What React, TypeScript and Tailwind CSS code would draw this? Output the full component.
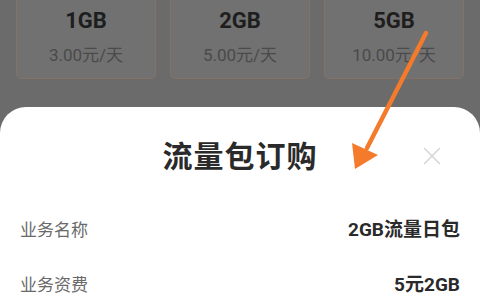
import { X } from "lucide-react";

const plans = [
  { size: "1GB", price: "3.00元/天" },
  { size: "2GB", price: "5.00元/天" },
  { size: "5GB", price: "10.00元/天" },
];

const rows = [
  { label: "业务名称", value: "2GB流量日包" },
  { label: "业务资费", value: "5元2GB" },
];

export default function App() {
  return (
    <div
      className="relative h-[300px] w-[480px] overflow-hidden bg-[#6b6b6b]"
      style={{ fontFamily: 'Roboto, "Noto Sans CJK SC", sans-serif' }}
    >
      <div className="flex gap-[14px] px-4">
        {plans.map((p) => (
          <div
            key={p.size}
            className="-mt-3 flex h-[91px] flex-1 flex-col items-center justify-end rounded-[5px] border border-[#857166] bg-[#717171] pb-[14px]"
          >
            <div className="text-[22px] font-bold leading-none text-[#1e1e1e]">{p.size}</div>
            <div className="mt-[15px] text-[17px] leading-none text-[#4a4a4a]">{p.price}</div>
          </div>
        ))}
      </div>

      <div className="mt-[28px] h-[200px] rounded-t-[26px] bg-white">
        <div className="relative flex h-[96px] items-center justify-center pt-[4px]">
          <div className="text-[30px] font-bold leading-none tracking-[1px] text-[#2a2a2a]">流量包订购</div>
          <X className="absolute right-[33px] top-[34px] h-[30px] w-[30px] text-[#d4d4d4]" strokeWidth={1.1} />
        </div>
        <div className="flex flex-col px-5">
          {rows.map((r) => (
            <div key={r.label} className="flex h-[55px] items-center justify-between">
              <span className="text-[17px] text-[#6a6a6a]">{r.label}</span>
              <span className="text-[19px] font-bold text-[#2a2a2a]">{r.value}</span>
            </div>
          ))}
        </div>
      </div>

      <svg className="absolute left-0 top-0" width="480" height="300" viewBox="0 0 480 300">
        <line x1="426" y1="33" x2="367" y2="148" stroke="#f47a2c" strokeWidth="4.5" strokeLinecap="round" />
        <polygon points="355,169 352,143 378,155" fill="#f47a2c" />
      </svg>
    </div>
  );
}
